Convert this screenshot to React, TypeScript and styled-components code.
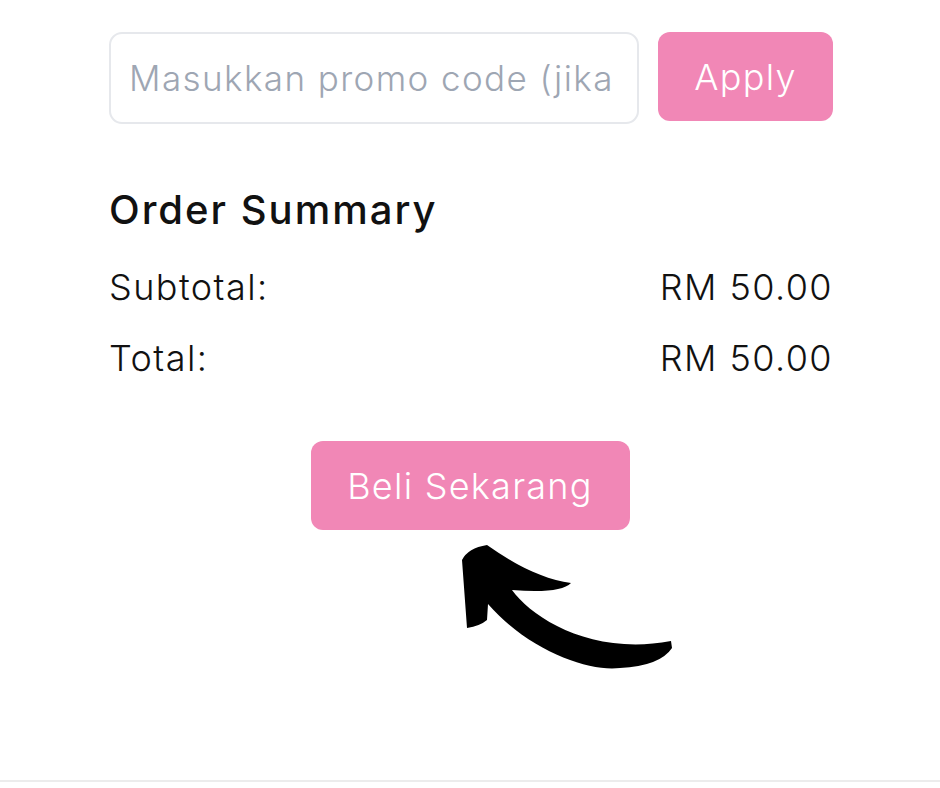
import React, { useState } from 'react'
import styled, { createGlobalStyle } from 'styled-components'

const GlobalStyle = createGlobalStyle`
  html, body {
    margin: 0;
    padding: 0;
    background: #ffffff;
  }
  body {
    font-family: Inter, 'Open Sans', 'Liberation Sans', sans-serif;
    color: #111111;
    letter-spacing: 0.03em;
  }
`

const Page = styled.div`
  width: 940px;
  height: 788px;
  display: flex;
  flex-direction: column;
  box-sizing: border-box;
`

const Content = styled.div`
  flex: 1;
  width: 724px;
  margin-left: 109px;
  padding-top: 32px;
  display: flex;
  flex-direction: column;
`

const PromoRow = styled.div`
  display: flex;
  align-items: flex-start;
  gap: 19px;
`

const PromoInput = styled.input`
  width: 530px;
  height: 92px;
  box-sizing: border-box;
  border: 2px solid #e6e8ec;
  border-radius: 13px;
  padding: 0 18px;
  font-family: inherit;
  font-size: 35px;
  font-weight: 350;
  letter-spacing: 0.04em;
  color: #111;
  outline: 0;

  &::placeholder {
    color: #9ea6b3;
  }
`

const PinkButton = styled.button<{ $width: number }>`
  width: ${(p) => p.$width}px;
  height: 89px;
  padding: 0;
  border: none;
  border-radius: 12px;
  background: #f187b6;
  color: #ffffff;
  font-family: inherit;
  font-size: 36px;
  font-weight: 350;
  letter-spacing: 0.035em;
  cursor: pointer;
`

const Heading = styled.h2`
  margin: 62px 0 0;
  font-size: 40px;
  font-weight: 450;
  line-height: 48px;
  letter-spacing: 0.05em;
`

const Rows = styled.div`
  display: flex;
  flex-direction: column;
  gap: 31px;
  margin-top: 33px;
`

const Row = styled.div`
  display: flex;
  justify-content: space-between;
  font-size: 36px;
  font-weight: 350;
  line-height: 40px;
  letter-spacing: 0.04em;
`

const CheckoutArea = styled.div`
  display: flex;
  flex-direction: column;
  align-items: center;
  margin-top: 63px;
  margin-left: -109px;
  width: 940px;
`

const ArrowWrap = styled.div`
  align-self: flex-start;
  margin-top: 10px;
  margin-left: 455px;
  width: 225px;
  height: 135px;
`

const BottomRule = styled.div`
  height: 2px;
  background: #ececec;
  margin-bottom: 6px;
`

const CurvedArrow: React.FC = () => (
  <svg width="225" height="135" viewBox="455 540 225 135">
    <path
      d="M 462 560
         Q 468 548 487 545
         C 515 565 545 580 571 583
         Q 560 594 512 590
         C 532 618 592 656 671 641
         L 672 648
         Q 660 666 620 668
         C 590 672 530 652 488 604
         L 487 620
         Q 480 626 467 628
         Z"
      fill="#000"
    />
  </svg>
)

const App: React.FC = () => {
  const [code, setCode] = useState<string>('')

  return (
    <Page>
      <GlobalStyle />
      <Content>
        <PromoRow>
          <PromoInput
            type="text"
            value={code}
            onChange={(e) => setCode(e.target.value)}
            placeholder="Masukkan promo code (jika ada)"
          />
          <PinkButton $width={175}>Apply</PinkButton>
        </PromoRow>

        <Heading>Order Summary</Heading>
        <Rows>
          <Row>
            <span>Subtotal:</span>
            <span>RM 50.00</span>
          </Row>
          <Row>
            <span>Total:</span>
            <span>RM 50.00</span>
          </Row>
        </Rows>

        <CheckoutArea>
          <PinkButton $width={319}>Beli Sekarang</PinkButton>
          <ArrowWrap>
            <CurvedArrow />
          </ArrowWrap>
        </CheckoutArea>
      </Content>
      <BottomRule />
    </Page>
  )
}

export default App
